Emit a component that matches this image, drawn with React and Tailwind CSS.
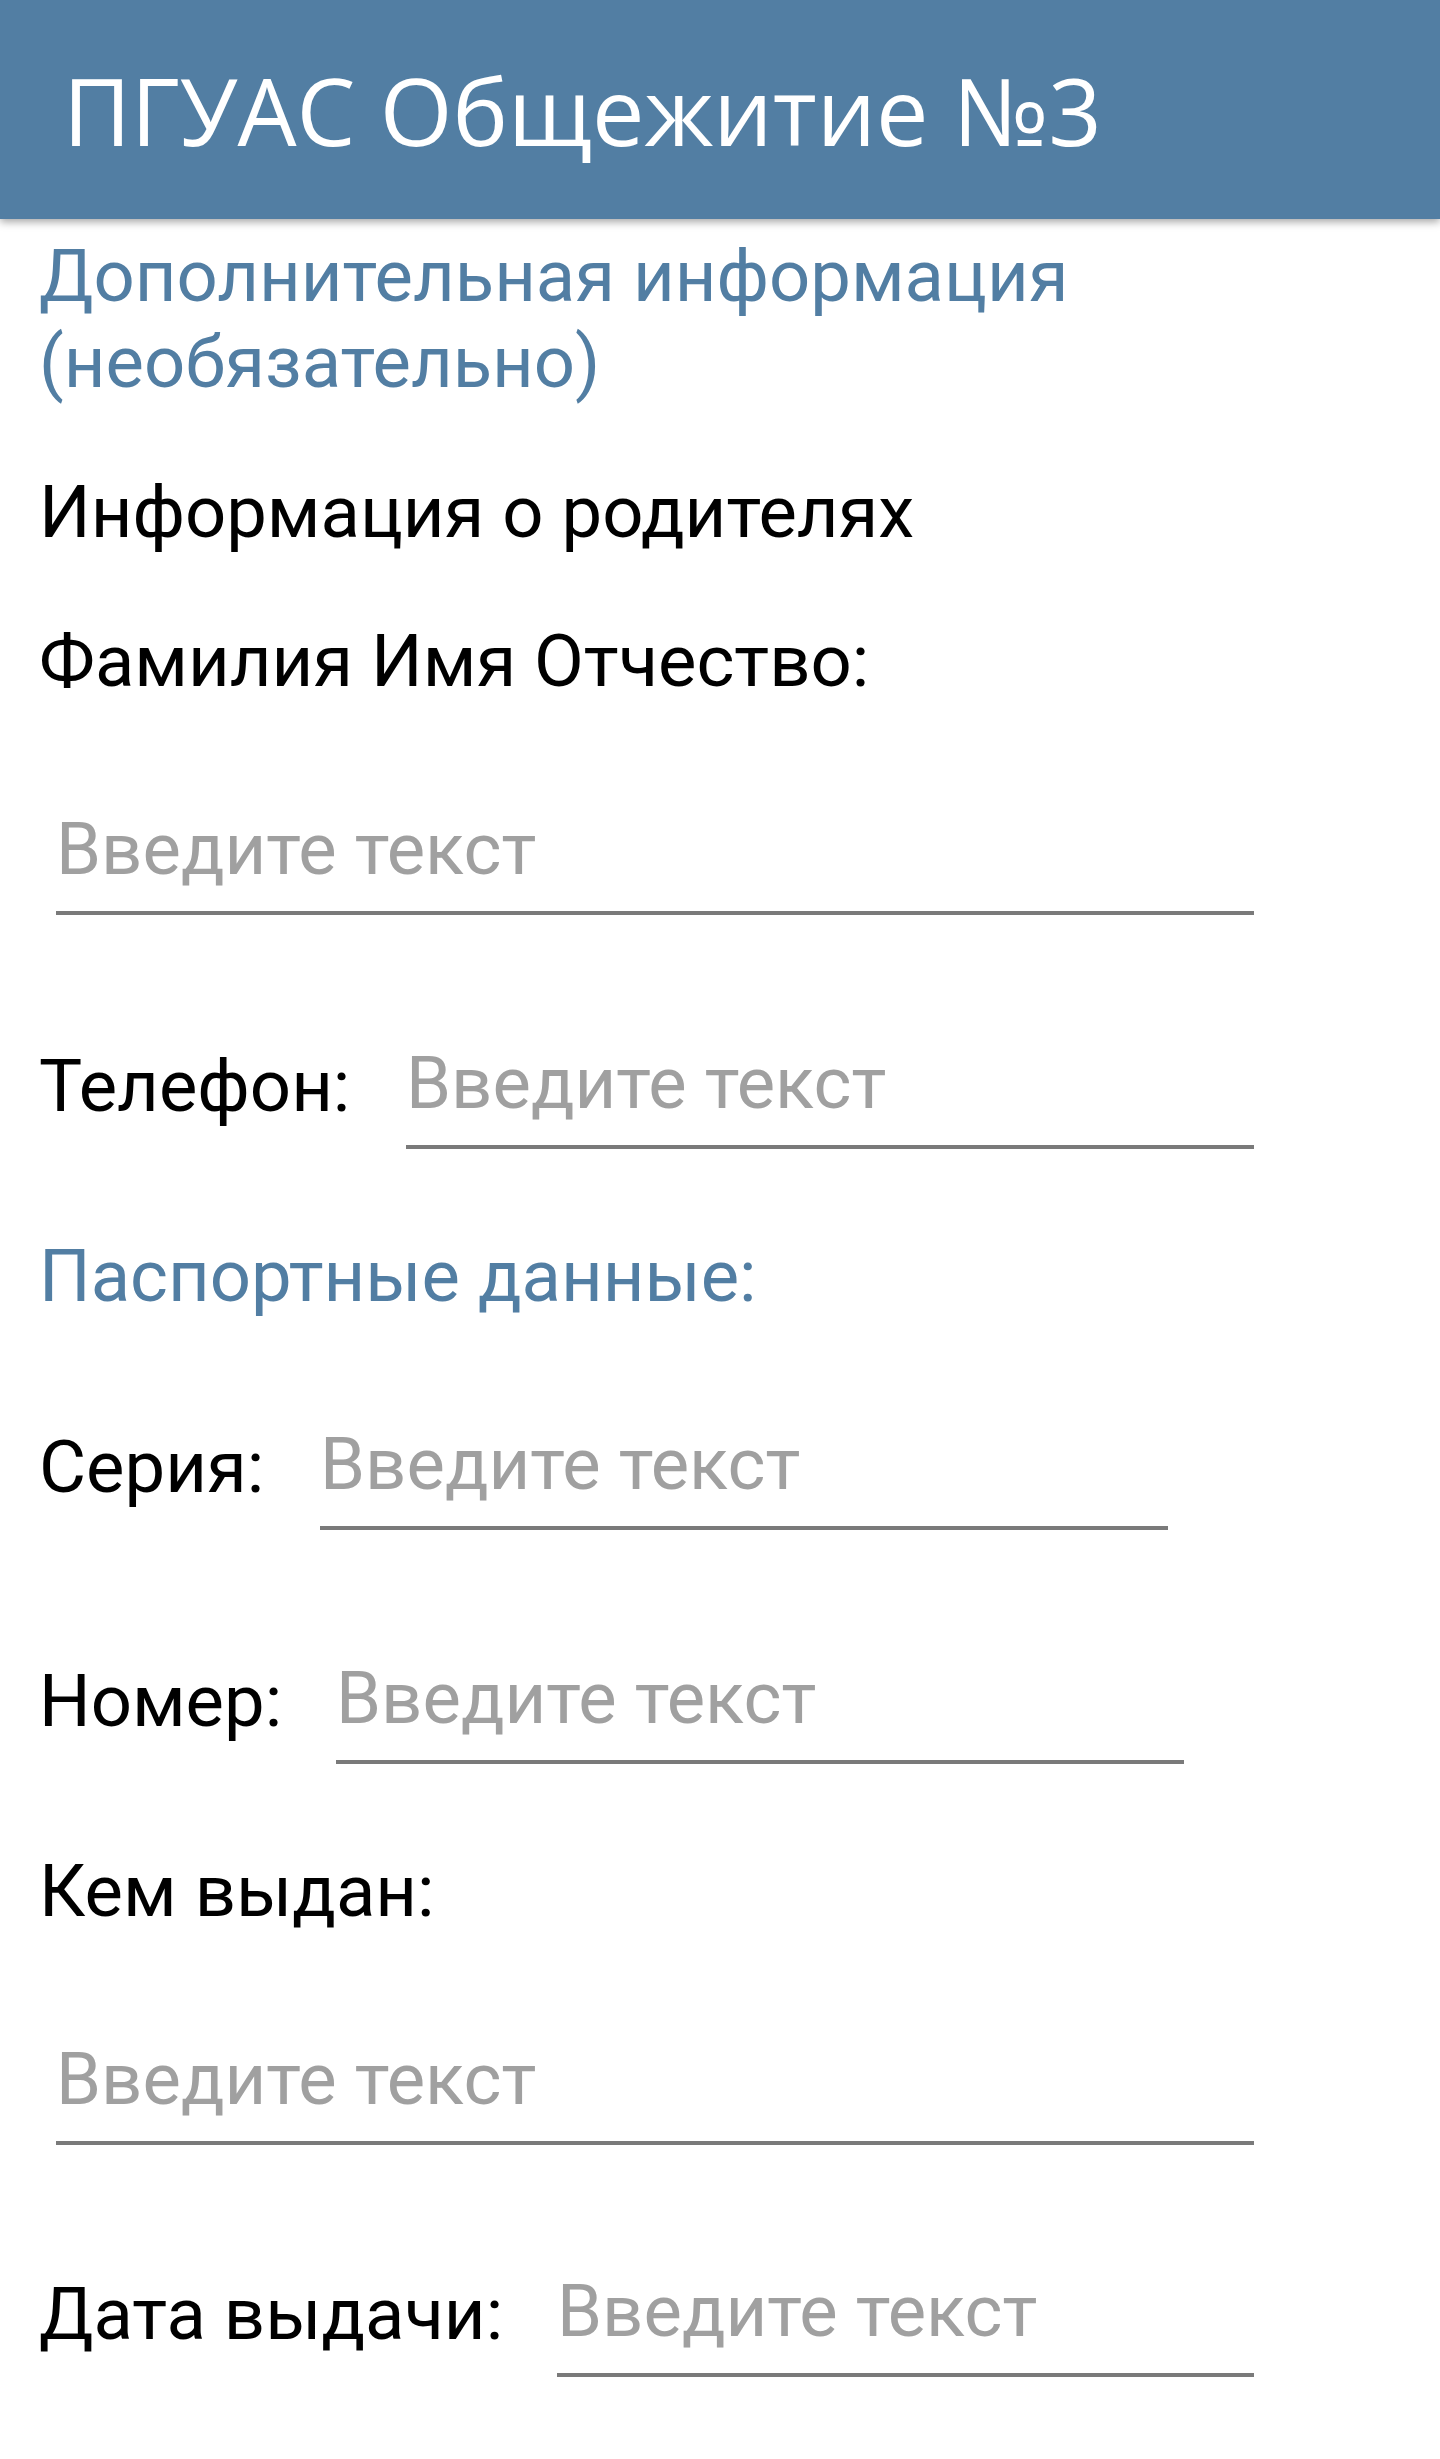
import React from "react";

const roboto = { fontFamily: "Roboto, 'Noto Sans', sans-serif" };

function Field({ className = "" }) {
  return (
    <div className={`border-b-[4px] border-[#7a7a7a] pb-[18px] ${className}`}>
      <div className="text-[72.4px] leading-[86px] text-[#a0a0a0] whitespace-nowrap">Введите текст</div>
    </div>
  );
}

function Row({ label, labelW, fieldW, className = "" }) {
  return (
    <div className={`flex items-start ${className}`}>
      <div className={`shrink-0 text-[72.4px] leading-[86px] text-black whitespace-nowrap ${labelW}`}>{label}</div>
      <Field className={`-mt-[3px] ${fieldW}`} />
    </div>
  );
}

export default function App() {
  return (
    <div className="w-[1440px] min-h-[2459px] bg-white" style={roboto}>
      <header
        className="relative z-10 h-[219px] bg-[#527ea3] flex items-center pl-[63px] shadow-[0_3px_8px_rgba(0,0,0,0.35)]"
      >
        <h1
          className="text-white text-[93.5px] leading-none font-normal whitespace-nowrap"
          style={{ fontFamily: "'Open Sans', 'Noto Sans', sans-serif" }}
        >
          ПГУАС Общежитие №3
        </h1>
      </header>

      <main className="pl-[39px] flex flex-col">
        <h2 className="mt-[15px] text-[72.4px] leading-[86px] text-[#527ea3] font-normal">
          Дополнительная информация
          <br />
          (необязательно)
        </h2>

        <div className="mt-[64px] text-[72.4px] leading-[86px] text-black">Информация о родителях</div>
        <div className="mt-[63px] text-[72.4px] leading-[86px] text-black">Фамилия Имя Отчество:</div>
        <Field className="mt-[102px] ml-[17px] w-[1198px]" />

        <Row className="mt-[129px]" label="Телефон:" labelW="w-[367px]" fieldW="w-[848px]" />

        <div className="mt-[85px] text-[72.4px] leading-[86px] text-[#527ea3]">Паспортные данные:</div>

        <Row className="mt-[105px]" label="Серия:" labelW="w-[281px]" fieldW="w-[848px]" />
        <Row className="mt-[129px]" label="Номер:" labelW="w-[297px]" fieldW="w-[848px]" />

        <div className="mt-[85px] text-[72.4px] leading-[86px] text-black">Кем выдан:</div>
        <Field className="mt-[102px] ml-[17px] w-[1198px]" />

        <Row className="mt-[127px]" label="Дата выдачи:" labelW="w-[518px]" fieldW="w-[697px]" />
      </main>
    </div>
  );
}
